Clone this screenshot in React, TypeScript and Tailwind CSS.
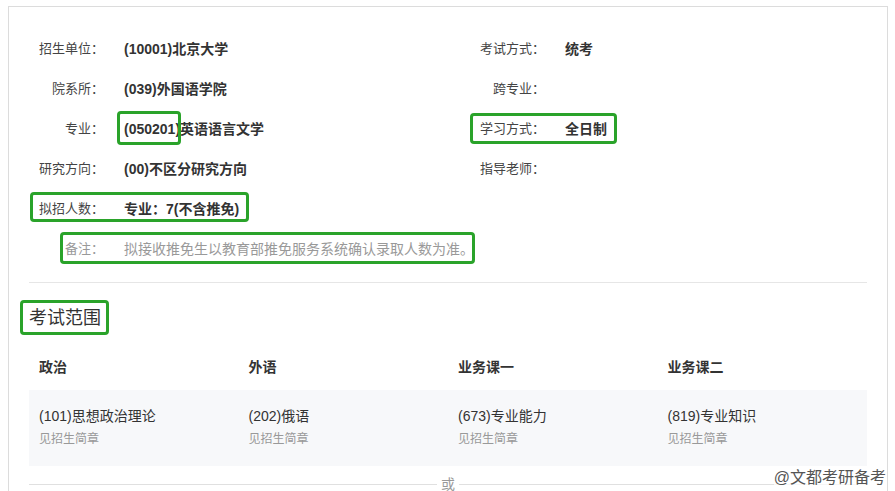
import React from "react";

const FONT = "font-['Liberation_Sans','Noto_Sans_CJK_SC',sans-serif]";

// green annotation frame laid over the content
function Mark({ className }: { className: string }) {
  return (
    <span
      className={`pointer-events-none absolute rounded-[4px] border-[3px] border-[#2aa32a] ${className}`}
    />
  );
}

function Label({ children, muted }: { children: React.ReactNode; muted?: boolean }) {
  return (
    <span
      className={`w-[75px] shrink-0 text-right text-[13px] ${muted ? "text-[#999]" : "text-[#444]"}`}
    >
      {children}
    </span>
  );
}

function Value({ children, muted }: { children?: React.ReactNode; muted?: boolean }) {
  return (
    <span
      className={`ml-5 text-[14px] ${muted ? "font-normal text-[#999]" : "font-bold text-[#333]"}`}
    >
      {children}
    </span>
  );
}

const SUBJECTS = [
  { head: "政治", name: "(101)思想政治理论" },
  { head: "外语", name: "(202)俄语" },
  { head: "业务课一", name: "(673)专业能力" },
  { head: "业务课二", name: "(819)专业知识" },
];

export default function App() {
  return (
    <div className={`relative h-[491px] w-[895px] overflow-hidden bg-white ${FONT}`}>
      <div className="ml-[8px] mt-[6px] w-[880px] border-x border-t border-[#dcdcdc] px-5 pt-[22px]">
        {/* basic info */}
        <div className="grid grid-cols-[441px_1fr]">
          <div className="flex h-10 items-center">
            <Label>招生单位：</Label>
            <Value>(10001)北京大学</Value>
          </div>
          <div className="flex h-10 items-center">
            <Label>考试方式：</Label>
            <Value>统考</Value>
          </div>

          <div className="flex h-10 items-center">
            <Label>院系所：</Label>
            <Value>(039)外国语学院</Value>
          </div>
          <div className="flex h-10 items-center">
            <Label>跨专业：</Label>
            <Value />
          </div>

          <div className="flex h-10 items-center">
            <Label>专业：</Label>
            <Value>
              <span className="relative">
                (050201)
                <Mark className="-left-[7px] -right-[1px] -top-[10px] -bottom-[8px]" />
              </span>
              英语语言文学
            </Value>
          </div>
          <div className="relative flex h-10 items-center">
            <Label>学习方式：</Label>
            <Value>全日制</Value>
            <Mark className="left-0 top-[4px] h-[31px] w-[147px]" />
          </div>

          <div className="flex h-10 items-center">
            <Label>研究方向：</Label>
            <Value>(00)不区分研究方向</Value>
          </div>
          <div className="flex h-10 items-center">
            <Label>指导老师：</Label>
            <Value />
          </div>

          <div className="relative col-span-2 flex h-10 items-center">
            <Label>拟招人数：</Label>
            <Value>专业：7(不含推免)</Value>
            <Mark className="left-[1px] top-[3px] h-[30px] w-[219px]" />
          </div>

          <div className="relative col-span-2 flex h-10 items-center">
            <Label muted>备注：</Label>
            <Value muted>拟接收推免生以教育部推免服务系统确认录取人数为准。</Value>
            <Mark className="left-[31px] top-[3px] h-[32px] w-[415px]" />
          </div>
        </div>

        <div className="mt-[13px] border-t border-[#e6e6e6]" />

        {/* exam scope */}
        <div className="mt-[21px] flex">
          <h2 className="relative text-[18px] font-normal leading-[28px] text-[#333]">
            考试范围
            <Mark className="-left-[9px] -right-[8px] -top-[4px] -bottom-[3px]" />
          </h2>
        </div>

        <div className="mt-3 grid grid-cols-4">
          {SUBJECTS.map((s) => (
            <div key={s.head} className="flex h-[46px] items-center pl-[10px] text-[14px] font-bold text-[#333]">
              {s.head}
            </div>
          ))}
        </div>
        <div className="grid h-[76px] grid-cols-4 bg-[#f7f8fa]">
          {SUBJECTS.map((s) => (
            <div key={s.head} className="pl-[10px] pt-[16px]">
              <div className="text-[14px] leading-[20px] text-[#333]">{s.name}</div>
              <div className="mt-[3px] text-[12px] leading-[20px] text-[#999]">见招生简章</div>
            </div>
          ))}
        </div>

        <div className="mt-[8px] flex items-center gap-[4px]">
          <div className="h-px flex-1 bg-[#e0e0e0]" />
          <span className="text-[14px] leading-[20px] text-[#999]">或</span>
          <div className="h-px flex-1 bg-[#e0e0e0]" />
        </div>
      </div>

      <span className="absolute bottom-[3px] right-[9px] bg-white/70 text-[16px] leading-[20px] text-[#555] [text-shadow:0_0_2px_#fff]">
        @文都考研备考
      </span>
    </div>
  );
}
